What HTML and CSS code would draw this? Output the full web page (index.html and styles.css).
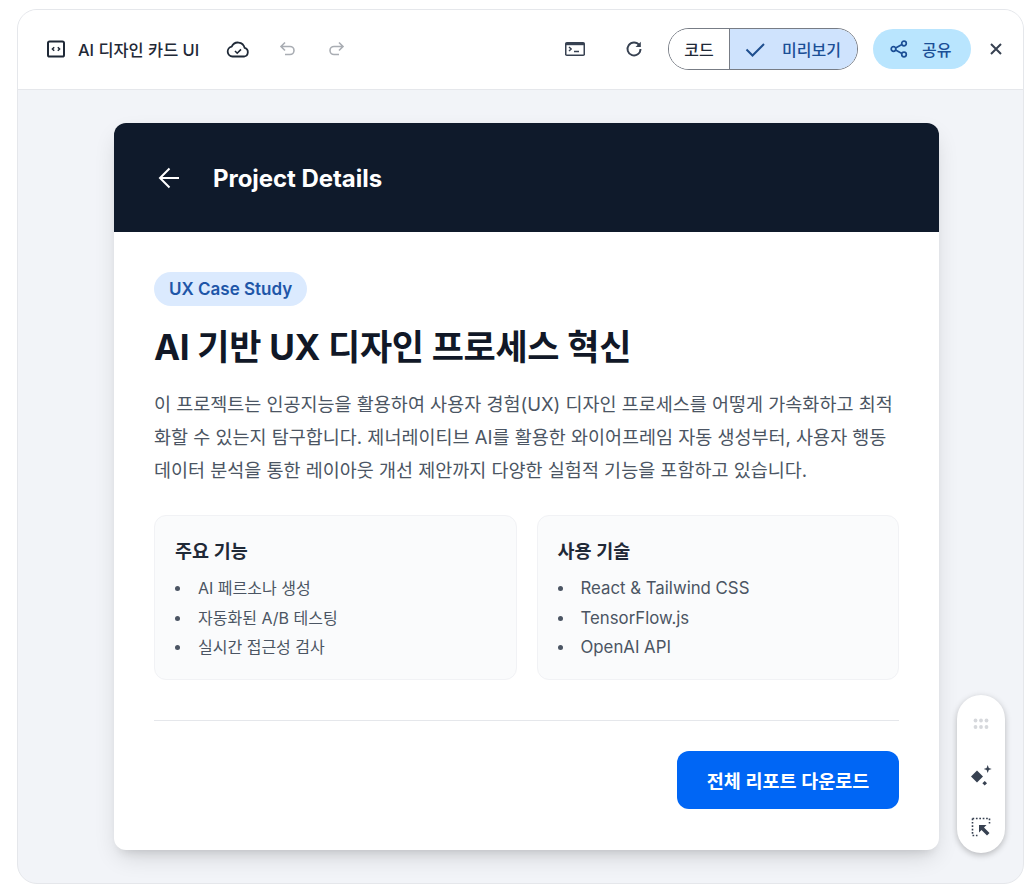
FILE: index.html
```html
<!DOCTYPE html>
<html lang="ko">
<head>
<meta charset="utf-8">
<title>AI 디자인 카드 UI</title>
<link rel="stylesheet" href="styles.css">
</head>
<body>
<div class="frame">
  <header class="topbar">
    <div class="left">
      <svg class="ic doc" viewBox="0 0 20 20" width="20" height="20"><rect x="2" y="2.5" width="16" height="15" rx="1.6" fill="none" stroke="#1f2937" stroke-width="2"/><path d="M8.2 8.2 6.4 10l1.8 1.8M11.8 8.2l1.8 1.8-1.8 1.8" fill="none" stroke="#1f2937" stroke-width="1.5"/></svg>
      <span class="doc-title">AI 디자인 카드 UI</span>
      <svg class="ic cloud" viewBox="0 0 24 24" width="24" height="24"><path d="M6.5 19.5a5 5 0 0 1-.8-9.9 6.800 6.800 0 0 1 12.900 1.300 4.400 4.400 0 0 1-.6 8.600z" fill="none" stroke="#1f2937" stroke-width="1.8" stroke-linejoin="round"/><path d="m9 14 2.200 2.200 3.800-3.800" fill="none" stroke="#1f2937" stroke-width="1.6"/></svg>
      <svg class="ic undo" viewBox="0 0 20 20" width="20" height="20"><path d="M7 3.500 3 7.500l4 4M3 7.500h9a4 4 0 0 1 0 8H7" fill="none" stroke="#a9adb3" stroke-width="1.6"/></svg>
      <svg class="ic redo" viewBox="0 0 20 20" width="20" height="20"><path d="M13 3.500l4 4-4 4M17 7.500H8a4 4 0 0 0 0 8h5" fill="none" stroke="#a9adb3" stroke-width="1.6"/></svg>
    </div>
    <div class="right">
      <svg class="ic term" viewBox="0 0 22 20" width="22" height="20"><rect x="1" y="3" width="20" height="14" rx="1.8" fill="#374151"/><rect x="2.5" y="6.200" width="17" height="9.300" fill="#fff"/><path d="m5 8 2.200 2L5 12" fill="none" stroke="#374151" stroke-width="1.4"/><path d="M10 12.500h5" stroke="#374151" stroke-width="1.5"/></svg>
      <svg class="ic reload" viewBox="0 0 20 20" width="20" height="20"><path d="M15.300 6.200A6.500 6.500 0 1 0 16.500 10" fill="none" stroke="#374151" stroke-width="1.9"/><path d="M16.800 2.800v5.200h-5.200z" fill="#374151"/></svg>
      <div class="toggle">
        <span class="seg code">코드</span>
        <span class="seg preview">
          <svg viewBox="0 0 24 24" width="24" height="24"><path d="m3.500 12.500 6 6L21 7" fill="none" stroke="#1f4f8f" stroke-width="2"/></svg>
          <span>미리보기</span>
        </span>
      </div>
      <button class="share">
        <svg viewBox="0 0 20 20" width="20" height="20"><circle cx="15" cy="4.500" r="2.300" fill="none" stroke="#1b4f96" stroke-width="1.7"/><circle cx="4.500" cy="10" r="2.300" fill="none" stroke="#1b4f96" stroke-width="1.7"/><circle cx="15" cy="15.500" r="2.300" fill="none" stroke="#1b4f96" stroke-width="1.7"/><path d="m6.600 8.900 6.300-3.300M6.600 11.100l6.300 3.300" stroke="#1b4f96" stroke-width="1.7"/></svg>
        <span>공유</span>
      </button>
      <svg class="ic close" viewBox="0 0 14 14" width="14" height="14"><path d="m2 2 10 10M12 2 2 12" stroke="#374151" stroke-width="2"/></svg>
    </div>
  </header>
  <main class="stage">
    <article class="card">
      <div class="card-head">
        <svg viewBox="0 0 28 24" width="28" height="24"><path d="M25 12H6M15.500 2.500 6 12l9.500 9.500" fill="none" stroke="#fff" stroke-width="2"/></svg>
        <h2>Project Details</h2>
      </div>
      <div class="card-body">
        <span class="badge">UX Case Study</span>
        <h1>AI 기반 UX 디자인 프로세스 혁신</h1>
        <p class="lead">이 프로젝트는 인공지능을 활용하여 사용자 경험(UX) 디자인 프로세스를 어떻게 가속화하고 최적화할 수 있는지 탐구합니다. 제너레이티브 AI를 활용한 와이어프레임 자동 생성부터, 사용자 행동 데이터 분석을 통한 레이아웃 개선 제안까지 다양한 실험적 기능을 포함하고 있습니다.</p>
        <div class="cols">
          <section class="box">
            <h3>주요 기능</h3>
            <ul>
              <li>AI 페르소나 생성</li>
              <li>자동화된 A/B 테스팅</li>
              <li>실시간 접근성 검사</li>
            </ul>
          </section>
          <section class="box">
            <h3>사용 기술</h3>
            <ul class="tech">
              <li>React &amp; Tailwind CSS</li>
              <li>TensorFlow.js</li>
              <li>OpenAI API</li>
            </ul>
          </section>
        </div>
        <div class="actions">
          <button class="download">전체 리포트 다운로드</button>
        </div>
      </div>
    </article>
    <aside class="float">
      <svg class="dots" viewBox="0 0 16 12" width="16" height="12"><g fill="#d6d8dc"><circle cx="2.500" cy="2.500" r="1.900"/><circle cx="8" cy="2.500" r="1.900"/><circle cx="13.500" cy="2.500" r="1.900"/><circle cx="2.500" cy="9" r="1.900"/><circle cx="8" cy="9" r="1.900"/><circle cx="13.500" cy="9" r="1.900"/></g></svg>
      <svg class="spark" viewBox="0 0 24 24" width="24" height="24"><g fill="#374151"><path d="m8 6.500 6 6-6 6-6-6z"/><path d="M18.700 1l1.100 2.900 2.900 1.100-2.900 1.100-1.100 2.900-1.100-2.900-2.900-1.100 2.900-1.100z"/><path d="m15.700 16.900 2.300 2.300-2.300 2.300-2.300-2.300z"/></g></svg>
      <svg class="pick" viewBox="0 0 20 20" width="20" height="20"><path d="M1.500 1.500h17M1.500 1.500v17M1.500 18.500h5M18.500 1.500v5" fill="none" stroke="#374151" stroke-width="1.6" stroke-dasharray="1.700 1.700"/><path d="M8 8h7.500L13 10.500l5.500 5.500-2.500 2.500-5.500-5.500L8 15.500z" fill="#374151"/></svg>
    </aside>
  </main>
</div>
</body>
</html>
```
FILE: styles.css
```css
* { box-sizing: border-box; }
html, body { margin: 0; height: 100%; }
body {
  background: #fff;
  padding: 9px 0 7px 17px;
  font-family: Inter, "Noto Sans CJK KR", "Noto Sans", sans-serif;
  overflow: hidden;
}
.frame {
  height: 875px;
  border: 1px solid #e5e7eb;
  border-radius: 20px;
  background: #f2f4f8;
  display: flex;
  flex-direction: column;
  overflow: hidden;
}
.topbar {
  height: 80px;
  flex: none;
  background: #fff;
  border-bottom: 1px solid #e5e7eb;
  display: flex;
  align-items: center;
  justify-content: space-between;
  padding: 0 20px 1px 28px;
}
.left, .right { display: flex; align-items: center; }
.ic { flex: none; display: block; }
.doc-title {
  margin-left: 12px;
  font-size: 16.4px;
  font-weight: 500;
  color: #1f2937;
  white-space: nowrap;
}
.cloud { margin-left: 27px; }
.undo { margin-left: 28px; }
.redo { margin-left: 28px; }
.reload { margin-left: 38px; }
.toggle {
  margin-left: 24px;
  height: 42px;
  width: 190px;
  display: flex;
  border: 1px solid #777c85;
  border-radius: 21px;
  overflow: hidden;
  font-size: 16px;
  font-weight: 500;
}
.seg { display: flex; align-items: center; height: 100%; white-space: nowrap; }
.code { width: 61px; justify-content: center; background: #fff; color: #1f2937; border-right: 1px solid #777c85; }
.preview { flex: 1; background: #cfe3fd; color: #1b4f96; padding-left: 13px; gap: 15px; }
.share {
  margin-left: 15px;
  width: 98px;
  height: 40px;
  border: 0;
  border-radius: 20px;
  background: #b9e5fe;
  color: #1b4f96;
  font: inherit;
  font-size: 16px;
  font-weight: 500;
  display: flex;
  align-items: center;
  padding: 0 0 0 16px;
  gap: 13px;
}
.close { margin-left: 18px; }
.stage {
  position: relative;
  flex: 1;
  padding: 33px 84px 33px 96px;
}
.card {
  width: 825px;
  height: 727px;
  background: #fff;
  border-radius: 12px;
  overflow: hidden;
  box-shadow: 0 10px 25px -5px rgba(0,0,0,.16), 0 8px 10px -6px rgba(0,0,0,.1);
}
.card-head {
  height: 109px;
  background: #0f1a2b;
  display: flex;
  align-items: center;
  padding: 0 40px;
  gap: 31px;
}
.card-head h2 {
  margin: 0;
  padding-top: 1px;
  font-size: 24px;
  font-weight: 700;
  letter-spacing: -.05px;
  color: #fff;
}
.card-body { padding: 40px 40px 0; }
.badge {
  display: inline-block;
  height: 34px;
  line-height: 34px;
  padding: 0 15px;
  border-radius: 17px;
  background: #dbeafe;
  color: #1e56a8;
  font-size: 17px;
  font-weight: 600;
}
h1 {
  margin: 16px 0 0;
  font-size: 35px;
  line-height: 50px;
  font-weight: 700;
  letter-spacing: -.3px;
  color: #111827;
}
.lead {
  margin: 16px 0 0;
  font-size: 18.5px;
  line-height: 33px;
  color: #4b5563;
}
.cols {
  margin-top: 28px;
  display: grid;
  grid-template-columns: 1fr 1fr;
  gap: 20px;
}
.box {
  height: 165px;
  background: #fafbfc;
  border: 1px solid #f1f2f5;
  border-radius: 12px;
  padding: 21px 20px 20px;
}
.box h3 {
  margin: 0;
  font-size: 18.5px;
  line-height: 28px;
  font-weight: 600;
  color: #1f2937;
}
.box ul { margin: 9px 0 0; padding: 0 0 0 23px; list-style: none; }
.box li {
  position: relative;
  font-size: 16px;
  line-height: 29.5px;
  color: #4b5563;
}
.box .tech li { font-size: 16.8px; }
.box li::before {
  content: "";
  position: absolute;
  left: -23px;
  top: 12px;
  width: 5px;
  height: 5px;
  border-radius: 50%;
  background: #4b5563;
}
.actions {
  margin-top: 40px;
  padding-top: 30px;
  border-top: 1px solid #e5e7eb;
  display: flex;
  justify-content: flex-end;
}
.download {
  width: 222px;
  height: 58px;
  border: 0;
  border-radius: 12px;
  background: #0066f5;
  color: #fff;
  font: inherit;
  font-size: 18.5px;
  font-weight: 600;
}
.float {
  position: absolute;
  left: 939px;
  top: 605px;
  width: 48px;
  height: 158px;
  background: #fff;
  border-radius: 24px;
  box-shadow: 0 2px 6px rgba(0,0,0,.25);
  display: flex;
  flex-direction: column;
  align-items: center;
  padding-top: 23px;
}
.spark { margin-top: 34px; }
.pick { margin-top: 29px; }
```
